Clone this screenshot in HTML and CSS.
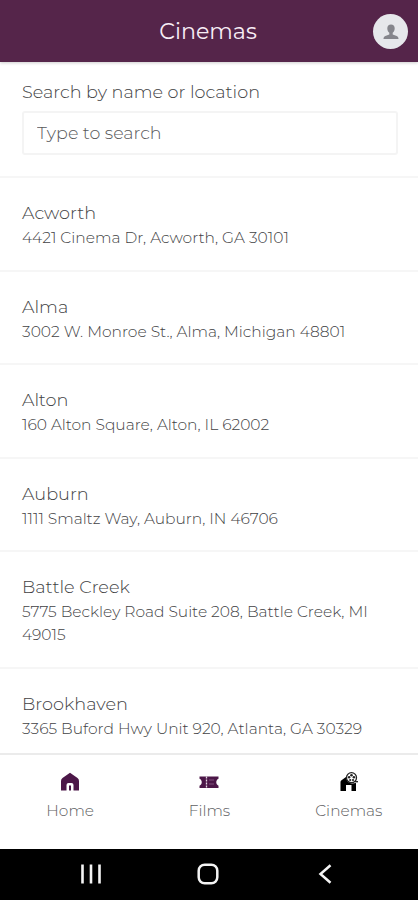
FILE: index.html
```html
<!DOCTYPE html>
<html lang="en">
<head>
<meta charset="utf-8">
<title>Cinemas</title>
<link rel="stylesheet" href="styles.css">
</head>
<body>
<div class="app">
  <header class="header">
    <h1 class="title">Cinemas</h1>
    <div class="avatar">
      <svg width="16" height="16" viewBox="0 0 16 16"><path fill="#85858c" d="M8 .5C5.700.5 4.300 2 4.300 4.300c0 2 .8 3.700 2 4.500v1.700L2.300 12C1 12.500.5 13.500.5 15h15c0-1.500-.5-2.500-1.800-3L9.700 10.500V8.800c1.200-.8 2-2.500 2-4.500C11.700 2 10.300.5 8 .5z"/></svg>
    </div>
  </header>
  <section class="search">
    <label class="label" for="q">Search by name or location</label>
    <input class="input" id="q" type="text" placeholder="Type to search">
  </section>
  <main class="list">
    <article class="row"><h2 class="name">Acworth</h2><p class="address">4421 Cinema Dr, Acworth, GA 30101</p></article>
    <article class="row"><h2 class="name">Alma</h2><p class="address">3002 W. Monroe St., Alma, Michigan 48801</p></article>
    <article class="row"><h2 class="name">Alton</h2><p class="address">160 Alton Square, Alton, IL 62002</p></article>
    <article class="row"><h2 class="name">Auburn</h2><p class="address">1111 Smaltz Way, Auburn, IN 46706</p></article>
    <article class="row"><h2 class="name">Battle Creek</h2><p class="address">5775 Beckley Road Suite 208, Battle Creek, MI 49015</p></article>
    <article class="row"><h2 class="name">Brookhaven</h2><p class="address">3365 Buford Hwy Unit 920, Atlanta, GA 30329</p></article>
  </main>
  <nav class="tabs">
    <a class="tab">
      <svg width="20" height="20" viewBox="0 0 20 20"><path fill="#4c1748" d="M10 .8 17.500 6Q19 7 19 9v9.500h-5.500V13q0-2-2-2h-3q-2 0-2 2v5.500H1V9q0-2 1.500-3z"/><path fill="#4c1748" d="M9 13.500h2v5H9z"/></svg>
      <span>Home</span>
    </a>
    <a class="tab">
      <svg width="20" height="20" viewBox="0 0 20 20"><path fill="#4c1748" d="M.5 4.500h19v2.300c-3 1.200-3 5.700 0 6.900V16H.5v-2.300c3-1.200 3-5.700 0-6.900z"/><path stroke="#e5d8e4" stroke-width="1.300" stroke-dasharray="2 1" d="M7.500 4.500V16"/><path stroke="#80527c" stroke-width="1" d="M10 8h5M10 12h5"/></svg>
      <span>Films</span>
    </a>
    <a class="tab">
      <svg width="20" height="20" viewBox="0 0 20 20"><path fill="#000" d="M1.500 19V10q0-1 1-1.700L7 5q1 6 6 6.500l4-.5v8h-4.500v-6H7v6z"/><circle cx="12.500" cy="5.700" r="5" fill="#fff" stroke="#222" stroke-width="1.300"/><path stroke="#222" stroke-width="1.300" fill="none" d="M16 9.700h3"/><g fill="#222"><circle cx="12.500" cy="3.300" r="1.300"/><circle cx="10.100" cy="5.300" r="1.200"/><circle cx="14.900" cy="5.300" r="1.200"/><circle cx="11.200" cy="8" r="1.100"/><circle cx="14" cy="8" r="1.100"/></g></svg>
      <span>Cinemas</span>
    </a>
  </nav>
  <footer class="system">
    <svg width="20" height="20" viewBox="0 0 20 20" fill="none" stroke="#f4f4f4" stroke-width="2.600"><path d="M1.500.5v19M10 .5v19M18.500.5v19"/></svg>
    <svg width="22" height="22" viewBox="0 0 22 22" fill="none" stroke="#f4f4f4" stroke-width="2.500"><rect x="1.700" y="1.700" width="18.600" height="18.600" rx="6"/></svg>
    <svg width="20" height="20" viewBox="0 0 20 20" fill="none" stroke="#f4f4f4" stroke-width="2.500"><path d="M15.500 1.300 5.500 10l10 8.700"/></svg>
  </footer>
</div>
</body>
</html>
```
FILE: styles.css
```css
* { box-sizing: border-box; }
body {
  margin: 0;
  background: #fff;
  color: #424244;
  font-family: Montserrat, Inter, sans-serif;
  font-weight: 300;
}
.app {
  display: flex;
  flex-direction: column;
  height: 900px;
  overflow: hidden;
}
.header {
  display: grid;
  grid-template-columns: 1fr auto 1fr;
  align-items: center;
  flex: none;
  height: 62px;
  padding: 0 10px 0 8px;
  background: #55254a;
  box-shadow: 0 1px 3px rgba(0, 0, 0, .2);
}
.title {
  grid-column: 2;
  margin: 0;
  color: #f8eef6;
  font-size: 22.200px;
  font-weight: 400;
}
.avatar {
  display: grid;
  place-items: center;
  justify-self: end;
  width: 35px;
  height: 35px;
  border-radius: 50%;
  background: #e6e7eb;
  padding-top: 2px;
}
.search {
  flex: none;
  height: 116px;
  padding: 17px 20px 0 22px;
  border-bottom: 2px solid #f6f6f6;
}
.label {
  display: block;
  height: 32px;
  font-size: 17.650px;
  line-height: 25px;
}
.input {
  display: block;
  width: 100%;
  height: 44px;
  padding: 0 13px 1px;
  border: 2px solid #f4f4f4;
  border-radius: 3px;
  background: #fff;
  font: inherit;
  font-size: 17.500px;
}
.input::placeholder { color: #58585a; opacity: 1; }
.list {
  flex: 1;
  min-height: 0;
  overflow: hidden;
}
.row {
  padding: 22px 22px 20.600px;
  border-bottom: 2px solid #f6f6f6;
}
.name {
  margin: 0 0 1px;
  font-size: 17.700px;
  font-weight: 300;
  line-height: 25px;
}
.address {
  margin: 0;
  font-size: 15.480px;
  line-height: 23px;
}
.tabs {
  display: grid;
  grid-template-columns: repeat(3, 1fr);
  flex: none;
  height: 96px;
  padding-top: 17px;
  border-top: 2px solid #ebebeb;
}
.tab {
  display: flex;
  flex-direction: column;
  align-items: center;
  gap: 8px;
  padding-left: 1px;
  color: #606062;
  font-size: 15.400px;
  line-height: 21px;
}
.system {
  display: grid;
  grid-template-columns: 117px 117px 117px;
  justify-content: center;
  justify-items: center;
  align-items: center;
  flex: none;
  height: 51px;
  padding: 0 2px 2px 0;
  background: #000;
}
```
